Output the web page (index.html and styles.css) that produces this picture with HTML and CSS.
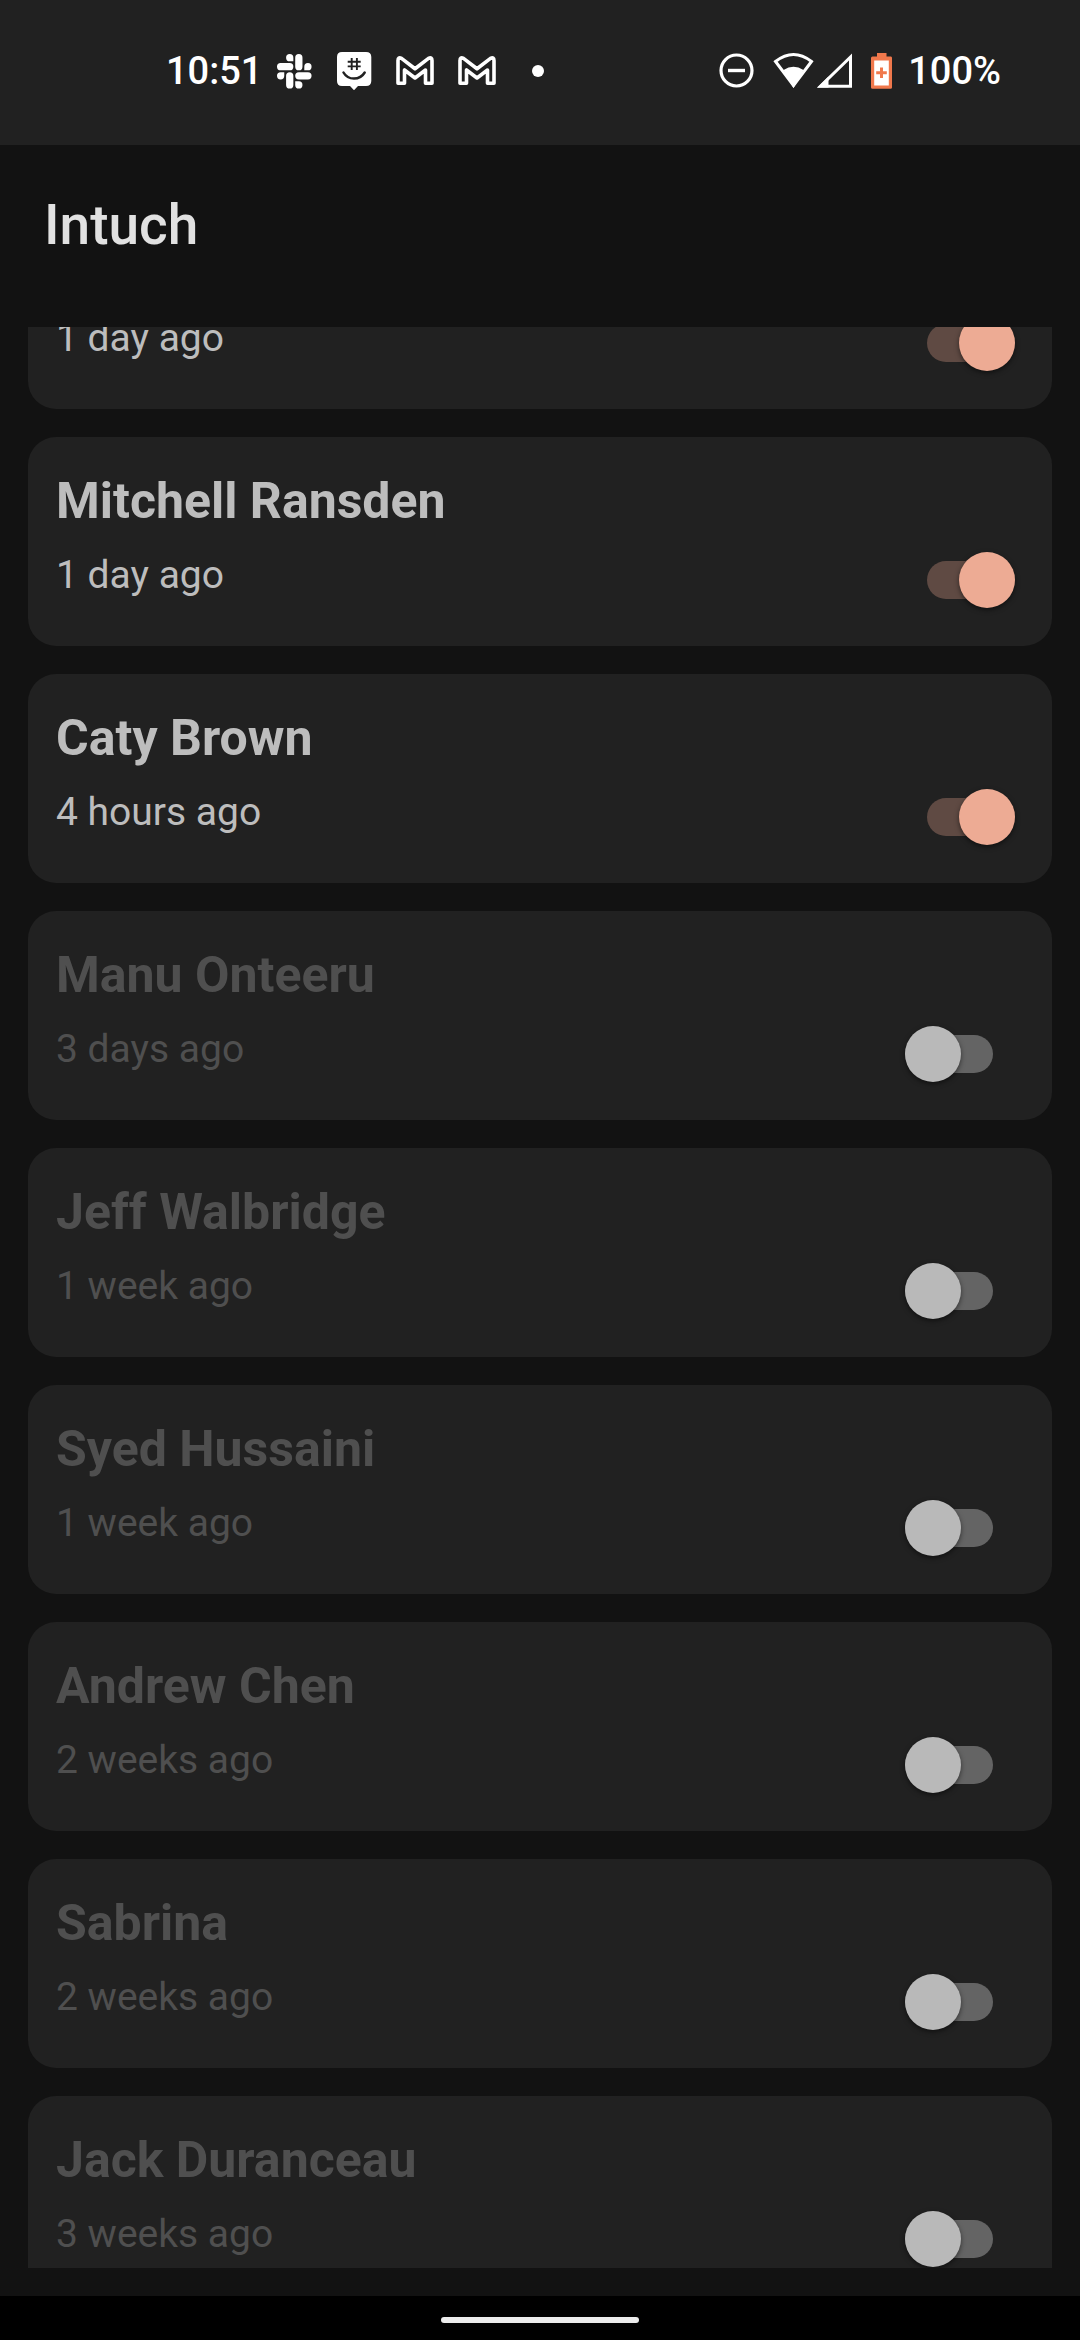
FILE: index.html
```html
<!DOCTYPE html>
<html lang="en">
<head>
<meta charset="utf-8">
<meta name="viewport" content="width=device-width, initial-scale=1">
<title>Intuch</title>
<link rel="stylesheet" href="styles.css">
</head>
<body>
<div class="status">
  <div class="status__left">
    <span class="status__text">10:51</span>
    <div class="status__apps">
      <svg class="icon" width="36" height="40" viewBox="0 0 36 40" aria-hidden="true">
        <path transform="translate(1 3) scale(1.44)" d="M5.042 15.165a2.528 2.528 0 0 1-2.52 2.523A2.528 2.528 0 0 1 0 15.165a2.527 2.527 0 0 1 2.522-2.52h2.52v2.52zM6.313 15.165a2.527 2.527 0 0 1 2.521-2.52 2.527 2.527 0 0 1 2.521 2.52v6.313A2.528 2.528 0 0 1 8.834 24a2.528 2.528 0 0 1-2.521-2.522v-6.313zM8.834 5.042a2.528 2.528 0 0 1-2.521-2.52A2.528 2.528 0 0 1 8.834 0a2.528 2.528 0 0 1 2.521 2.522v2.52H8.834zM8.834 6.313a2.528 2.528 0 0 1 2.521 2.521 2.528 2.528 0 0 1-2.521 2.521H2.522A2.528 2.528 0 0 1 0 8.834a2.528 2.528 0 0 1 2.522-2.521h6.312zM18.956 8.834a2.528 2.528 0 0 1 2.522-2.521A2.528 2.528 0 0 1 24 8.834a2.528 2.528 0 0 1-2.522 2.521h-2.522V8.834zM17.688 8.834a2.528 2.528 0 0 1-2.523 2.521 2.527 2.527 0 0 1-2.52-2.521V2.522A2.527 2.527 0 0 1 15.165 0a2.528 2.528 0 0 1 2.523 2.522v6.312zM15.165 18.956a2.528 2.528 0 0 1 2.523 2.522A2.528 2.528 0 0 1 15.165 24a2.527 2.527 0 0 1-2.52-2.522v-2.522h2.52zM15.165 17.688a2.527 2.527 0 0 1-2.52-2.523 2.526 2.526 0 0 1 2.52-2.52h6.313A2.527 2.527 0 0 1 24 15.165a2.528 2.528 0 0 1-2.522 2.523h-6.313z"/>
      </svg>
      <svg class="icon" width="36" height="40" viewBox="0 0 36 40" aria-hidden="true">
        <path d="M6 1H30Q35.300 1 35.300 6V30Q35.300 35 30 35H22L18 39.300 14 35H6Q1 35 1 30V6Q1 1 6 1Z"/>
        <path class="icon__cut" stroke-width="1.900" d="M15.700 7V19M20.900 7V19M11.700 10.700H24.700M11.700 15.400H24.700"/>
        <path class="icon__cut" stroke-width="2.500" stroke-linecap="round" d="M7.500 21.500Q11 27.600 18 27.600T28.700 21.500"/>
      </svg>
      <svg class="icon" width="38" height="40" viewBox="0 0 38 40" aria-hidden="true">
        <path class="icon__line" stroke-width="3.600" stroke-linejoin="round" d="M2 32.300V9.500Q2 5.600 5.500 7.400L19 17.800 32.500 7.400Q36 5.600 36 9.500V32.300H29.500V19L19 27 8.500 19V32.300Z"/>
      </svg>
      <svg class="icon" width="38" height="40" viewBox="0 0 38 40" aria-hidden="true">
        <path class="icon__line" stroke-width="3.600" stroke-linejoin="round" d="M2 32.300V9.500Q2 5.600 5.500 7.400L19 17.800 32.500 7.400Q36 5.600 36 9.500V32.300H29.500V19L19 27 8.500 19V32.300Z"/>
      </svg>
      <svg class="icon" width="36" height="40" viewBox="0 0 36 40" aria-hidden="true"><circle cx="18" cy="20" r="6"/></svg>
    </div>
  </div>
  <div class="status__right">
    <svg class="icon" width="36" height="40" viewBox="0 0 36 40" aria-hidden="true">
      <circle class="icon__line" cx="17.500" cy="19.500" r="15.500" stroke-width="3.200"/>
      <path d="M9 17.800H26V21.200H9Z"/>
    </svg>
    <div class="status__signal">
      <svg class="icon" width="41" height="40" viewBox="0 0 41 40" aria-hidden="true">
        <path class="icon__line" stroke-width="3" d="M2.500 10.500Q20.500 -3.500 38.500 10.500L20.500 34.500Z"/>
        <path d="M10.500 19Q20.500 12.500 30.500 19L20.500 37Z"/>
      </svg>
      <svg class="icon" width="36" height="40" viewBox="0 0 36 40" aria-hidden="true">
        <path class="icon__line" stroke-width="3" d="M3.500 35.300H33.500V6Z"/>
        <path d="M0.500 36.500 11.500 25.500V36.500Z"/>
      </svg>
    </div>
    <div class="status__power">
      <svg width="22" height="40" viewBox="0 0 22 40" aria-hidden="true">
        <path fill="#f0784c" d="M6 2H15.500V5.500H20Q21 5.500 21 7V36.500Q21 37.800 19.500 37.800H1.500Q0 37.800 0 36.500V7Q0 5.500 1.500 5.500H6Z"/>
        <path fill="#fff" d="M3.200 9.500H17.800V34.500H3.200Z"/>
        <path fill="#f0784c" d="M9 16.500H12V20.300H15.800V23.300H12V27H9V23.300H5.200V20.300H9Z"/>
      </svg>
      <span class="status__text">100%</span>
    </div>
  </div>
</div>

<header class="header"><h1 class="header__title">Intuch</h1></header>

<main class="main">
  <ul class="list">
    <li class="card card--on">
      <div class="card__text"><p class="card__time" id="c0">1 day ago</p></div>
      <input class="switch" type="checkbox" role="switch" aria-labelledby="c0" checked>
    </li>
    <li class="card card--on">
      <div class="card__text"><label class="card__name" for="c1">Mitchell Ransden</label><p class="card__time">1 day ago</p></div>
      <input class="switch" type="checkbox" role="switch" id="c1" checked>
    </li>
    <li class="card card--on">
      <div class="card__text"><label class="card__name" for="c2">Caty Brown</label><p class="card__time">4 hours ago</p></div>
      <input class="switch" type="checkbox" role="switch" id="c2" checked>
    </li>
    <li class="card">
      <div class="card__text"><label class="card__name" for="c3">Manu Onteeru</label><p class="card__time">3 days ago</p></div>
      <input class="switch" type="checkbox" role="switch" id="c3">
    </li>
    <li class="card">
      <div class="card__text"><label class="card__name" for="c4">Jeff Walbridge</label><p class="card__time">1 week ago</p></div>
      <input class="switch" type="checkbox" role="switch" id="c4">
    </li>
    <li class="card">
      <div class="card__text"><label class="card__name" for="c5">Syed Hussaini</label><p class="card__time">1 week ago</p></div>
      <input class="switch" type="checkbox" role="switch" id="c5">
    </li>
    <li class="card">
      <div class="card__text"><label class="card__name" for="c6">Andrew Chen</label><p class="card__time">2 weeks ago</p></div>
      <input class="switch" type="checkbox" role="switch" id="c6">
    </li>
    <li class="card">
      <div class="card__text"><label class="card__name" for="c7">Sabrina</label><p class="card__time">2 weeks ago</p></div>
      <input class="switch" type="checkbox" role="switch" id="c7">
    </li>
    <li class="card">
      <div class="card__text"><label class="card__name" for="c8">Jack Duranceau</label><p class="card__time">3 weeks ago</p></div>
      <input class="switch" type="checkbox" role="switch" id="c8">
    </li>
  </ul>
</main>

<footer class="nav"><div class="nav__handle"></div></footer>
</body>
</html>
```
FILE: styles.css
```css
* {
  box-sizing: border-box;
}

body {
  margin: 0;
  height: 100vh;
  display: flex;
  flex-direction: column;
  overflow: hidden;
  background: #121212;
  color: #bdbdbd;
  font-family: Roboto, "Liberation Sans", sans-serif;
}

/* System status bar */
.status {
  display: flex;
  justify-content: space-between;
  padding: 51px 79px 54px 166px;
  background: #212121;
  color: #fff;
}

.status__left,
.status__right,
.status__apps,
.status__signal,
.status__power {
  display: flex;
  align-items: center;
}

.status__left {
  gap: 14px;
}

.status__apps {
  gap: 24px;
}

.status__right {
  gap: 18px;
}

.status__signal {
  gap: 3px;
}

.status__power {
  gap: 15px;
}

.status__text {
  font-size: 38px;
  font-weight: 500;
  line-height: 40px;
}

.icon {
  fill: #fff;
}

.icon__line {
  fill: none;
  stroke: #fff;
}

.icon__cut {
  fill: none;
  stroke: #212121;
}

/* App header */
.header {
  padding: 48px 44px 70px;
}

.header__title {
  margin: 0;
  color: #e1e1e1;
  font-size: 55px;
  font-weight: 500;
  line-height: 64px;
}

/* Contact list, scrolled part-way through its first card */
.main {
  flex: 1;
  min-height: 0;
  margin: 0 28px 28px;
  overflow: hidden;
}

.list {
  display: flex;
  flex-direction: column;
  gap: 28px;
  margin: -127px 0 0;
  padding: 0;
  list-style: none;
}

.card {
  display: flex;
  align-items: flex-end;
  justify-content: space-between;
  min-height: 209px;
  padding: 28px;
  border-radius: 28px;
  background: #212121;
  color: #4f4f4f;
}

.card--on {
  color: #bdbdbd;
}

.card__text {
  display: flex;
  flex-direction: column;
  gap: 15px;
  padding-bottom: 20px;
}

.card__name {
  font-size: 50px;
  font-weight: 700;
  line-height: 72px;
}

.card__time {
  margin: 0;
  font-size: 39px;
  line-height: 46px;
}

.switch {
  appearance: none;
  display: flex;
  align-items: center;
  width: 88px;
  height: 38px;
  margin: 0 31px 19px 0;
  border-radius: 19px;
  background: #646464;
}

.switch::before {
  content: "";
  flex: none;
  width: 56px;
  height: 56px;
  border-radius: 50%;
  background: #b9b9b9;
  box-shadow: 0 2px 5px rgba(0, 0, 0, 0.5);
}

.switch:checked {
  justify-content: flex-end;
  margin-right: 9px;
  background: #5f4a43;
}

.switch:checked::before {
  background: #edab94;
}

/* Gesture navigation */
.nav {
  display: flex;
  justify-content: center;
  padding: 21px 0 17px;
  background: #000;
}

.nav__handle {
  width: 198px;
  height: 6px;
  border-radius: 3px;
  background: #ececec;
}
```
